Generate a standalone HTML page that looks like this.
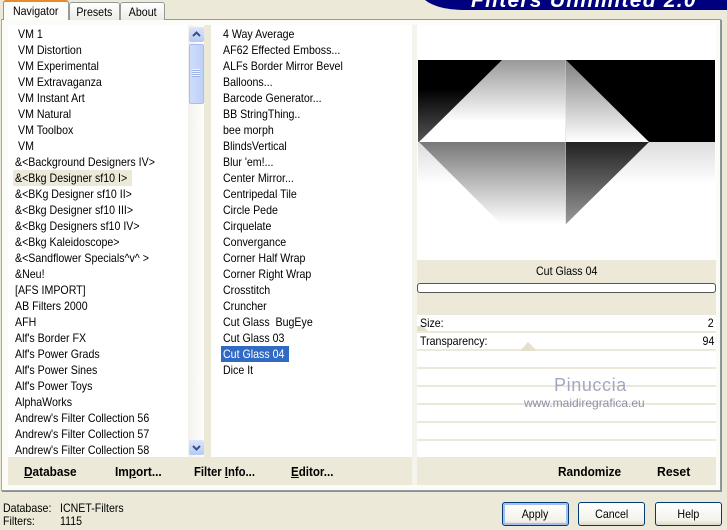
<!DOCTYPE html>
<html><head><meta charset="utf-8"><style>
html,body{margin:0;padding:0}
body{width:727px;height:530px;position:relative;overflow:hidden;background:#ece9d8;font:12px/16px "Liberation Sans",sans-serif;color:#000}
.a{position:absolute}
.r{position:absolute;white-space:pre;height:16px;line-height:16px;transform:scaleX(.885);transform-origin:0 0}
.e{transform-origin:100% 0}
.b{font-weight:bold;font-size:13px;transform:scaleX(.91)}
.s{display:inline-block;transform:scaleX(.885);white-space:pre}
u{text-decoration:underline}
.btn{position:absolute;top:502px;width:65px;height:22px;border:1px solid #003c74;border-radius:3px;background:linear-gradient(#fff,#f3f2ea 80%,#dcd8c8);text-align:center;line-height:22px}
</style></head><body>
<svg class="a" style="left:420px;top:0" width="307" height="12"><path d="M5 0C14 7 28 10 46 10H307V0Z" fill="#00007f"/></svg>
<div class="a" style="left:471px;top:-9px;color:#fff;font:italic bold 21px/20px 'Liberation Sans',sans-serif;letter-spacing:1.25px;white-space:pre">Filters Unlimited 2.0</div>

<div class="a" style="left:1px;top:19px;width:718px;height:470px;border:1px solid #919b9c;border-left-color:#a9a9a0;background:#fbfbf8;box-shadow:1px 1px 0 #8f8f88"></div>
<div class="a" style="left:3px;top:0;width:66px;height:20px;background:#fcfcf8;border:1px solid #919b9c;border-top:2px solid #e68b2c;border-bottom:0;border-radius:3px 3px 0 0;box-sizing:border-box;text-align:center;line-height:18px"><span class="s">Navigator</span></div>
<div class="a" style="left:69px;top:2px;width:49px;height:17px;background:linear-gradient(#fff,#ecebe4);border:1px solid #919b9c;border-bottom:0;border-radius:3px 3px 0 0;text-align:center;line-height:18px"><span class="s">Presets</span></div>
<div class="a" style="left:120px;top:2px;width:43px;height:17px;background:linear-gradient(#fff,#ecebe4);border:1px solid #919b9c;border-bottom:0;border-radius:3px 3px 0 0;text-align:center;line-height:18px"><span class="s">About</span></div>

<div class="a" style="left:8px;top:25px;width:180px;height:432px;background:#fff"></div>
<div class="a" style="left:188px;top:25px;width:16px;height:432px;background:linear-gradient(90deg,#f3f1ec,#fefefb)"></div>
<div class="a" style="left:204px;top:25px;width:7px;height:432px;background:#ece9d8"></div>
<div class="a" style="left:211px;top:25px;width:201px;height:432px;background:#fff"></div>
<div class="a" style="left:412px;top:25px;width:5px;height:460px;background:#f5f4ec"></div>
<div class="a" style="left:417px;top:25px;width:299px;height:235px;background:#fff"></div>

<div class="a" style="left:189px;top:27px;width:15px;height:15px;background:linear-gradient(#dbe6fc,#b6c9f6);border-radius:2px"></div>
<svg class="a" style="left:189px;top:27px" width="15" height="15"><path d="M4 9L7.500 5.500L11 9" fill="none" stroke="#3a5080" stroke-width="2"/></svg>
<div class="a" style="left:189px;top:44px;width:13px;height:58px;border:1px solid #a9bdf0;background:linear-gradient(90deg,#cfdcfb,#bed0f9);border-radius:2px"></div>
<div class="a" style="left:192px;top:69px;width:8px;height:8px;background:repeating-linear-gradient(#eef3fe 0 1px,#9db3e6 1px 2px)"></div>
<div class="a" style="left:189px;top:440px;width:15px;height:15px;background:linear-gradient(#dbe6fc,#b6c9f6);border-radius:2px"></div>
<svg class="a" style="left:189px;top:440px" width="15" height="15"><path d="M4 6L7.500 9.500L11 6" fill="none" stroke="#3a5080" stroke-width="2"/></svg>

<div class="a" style="left:13px;top:170px;width:119px;height:16px;background:#ece9d8"></div>
<div class="r" style="left:18px;top:26px">VM 1</div>
<div class="r" style="left:18px;top:42px">VM Distortion</div>
<div class="r" style="left:18px;top:58px">VM Experimental</div>
<div class="r" style="left:18px;top:74px">VM Extravaganza</div>
<div class="r" style="left:18px;top:90px">VM Instant Art</div>
<div class="r" style="left:18px;top:106px">VM Natural</div>
<div class="r" style="left:18px;top:122px">VM Toolbox</div>
<div class="r" style="left:18px;top:138px">VM</div>
<div class="r" style="left:15px;top:154px">&amp;&lt;Background Designers IV&gt;</div>
<div class="r" style="left:15px;top:170px">&amp;&lt;Bkg Designer sf10 I&gt;</div>
<div class="r" style="left:15px;top:186px">&amp;&lt;BKg Designer sf10 II&gt;</div>
<div class="r" style="left:15px;top:202px">&amp;&lt;Bkg Designer sf10 III&gt;</div>
<div class="r" style="left:15px;top:218px">&amp;&lt;Bkg Designers sf10 IV&gt;</div>
<div class="r" style="left:15px;top:234px">&amp;&lt;Bkg Kaleidoscope&gt;</div>
<div class="r" style="left:15px;top:250px">&amp;&lt;Sandflower Specials^v^ &gt;</div>
<div class="r" style="left:15px;top:266px">&amp;Neu!</div>
<div class="r" style="left:15px;top:282px">[AFS IMPORT]</div>
<div class="r" style="left:15px;top:298px">AB Filters 2000</div>
<div class="r" style="left:15px;top:314px">AFH</div>
<div class="r" style="left:15px;top:330px">Alf's Border FX</div>
<div class="r" style="left:15px;top:346px">Alf's Power Grads</div>
<div class="r" style="left:15px;top:362px">Alf's Power Sines</div>
<div class="r" style="left:15px;top:378px">Alf's Power Toys</div>
<div class="r" style="left:15px;top:394px">AlphaWorks</div>
<div class="r" style="left:15px;top:410px">Andrew's Filter Collection 56</div>
<div class="r" style="left:15px;top:426px">Andrew's Filter Collection 57</div>
<div class="r" style="left:15px;top:442px">Andrew's Filter Collection 58</div>

<div class="a" style="left:221px;top:346px;width:68px;height:16px;background:#316ac5"></div>
<div class="r" style="left:223px;top:26px">4 Way Average</div>
<div class="r" style="left:223px;top:42px">AF62 Effected Emboss...</div>
<div class="r" style="left:223px;top:58px">ALFs Border Mirror Bevel</div>
<div class="r" style="left:223px;top:74px">Balloons...</div>
<div class="r" style="left:223px;top:90px">Barcode Generator...</div>
<div class="r" style="left:223px;top:106px">BB StringThing..</div>
<div class="r" style="left:223px;top:122px">bee morph</div>
<div class="r" style="left:223px;top:138px">BlindsVertical</div>
<div class="r" style="left:223px;top:154px">Blur 'em!...</div>
<div class="r" style="left:223px;top:170px">Center Mirror...</div>
<div class="r" style="left:223px;top:186px">Centripedal Tile</div>
<div class="r" style="left:223px;top:202px">Circle Pede</div>
<div class="r" style="left:223px;top:218px">Cirquelate</div>
<div class="r" style="left:223px;top:234px">Convergance</div>
<div class="r" style="left:223px;top:250px">Corner Half Wrap</div>
<div class="r" style="left:223px;top:266px">Corner Right Wrap</div>
<div class="r" style="left:223px;top:282px">Crosstitch</div>
<div class="r" style="left:223px;top:298px">Cruncher</div>
<div class="r" style="left:223px;top:314px">Cut Glass  BugEye</div>
<div class="r" style="left:223px;top:330px">Cut Glass 03</div>
<div class="r" style="left:223px;top:346px;color:#fff">Cut Glass 04</div>
<div class="r" style="left:223px;top:362px">Dice It</div>

<svg class="a" style="left:418px;top:60px" width="297" height="166">
<defs>
<linearGradient id="g1" x1="0" y1="0" x2="0" y2="1"><stop offset="0" stop-color="#999"/><stop offset=".75" stop-color="#fff"/><stop offset="1" stop-color="#fff"/></linearGradient>
<linearGradient id="g1b" x1="0" y1="0" x2="0" y2="1"><stop offset="0" stop-color="#808080"/><stop offset="1" stop-color="#fff"/></linearGradient>
<linearGradient id="g2" x1="0" y1="0" x2="0" y2="1"><stop offset="0" stop-color="#787878"/><stop offset="1" stop-color="#fff"/></linearGradient>
<linearGradient id="g3" x1="0" y1="0" x2="0" y2="1"><stop offset="0" stop-color="#222"/><stop offset="1" stop-color="#999"/></linearGradient>
<linearGradient id="g4" x1="0" y1="0" x2="0" y2="1"><stop offset="0" stop-color="#000"/><stop offset=".35" stop-color="#000"/><stop offset="1" stop-color="#555"/></linearGradient>
<linearGradient id="g5" x1="0" y1="0" x2="0" y2="1"><stop offset="0" stop-color="#ddd"/><stop offset=".5" stop-color="#fff"/><stop offset="1" stop-color="#fff"/></linearGradient>
</defs>
<rect x="0" y="0" width="297" height="82" fill="#000"/>
<rect x="0" y="0" width="84" height="82" fill="url(#g4)"/>
<rect x="0" y="82" width="297" height="84" fill="url(#g5)"/>
<path d="M84 0H148V82H1Z" fill="url(#g1)"/>
<path d="M148 0L231 82H148Z" fill="url(#g1b)"/>
<path d="M1 82H148V164H83Z" fill="url(#g2)"/>
<path d="M148 82H231L148 164Z" fill="url(#g3)"/>
<rect x="147" y="0" width="1" height="164" fill="#ccc" opacity=".4"/>
</svg>

<div class="a" style="left:417px;top:260px;width:299px;height:55px;background:#ece9d8"></div>
<div class="a" style="left:417px;top:263px;width:299px;height:16px;text-align:center"><span class="s">Cut Glass 04</span></div>
<div class="a" style="left:417px;top:283px;width:297px;height:8px;border:1px solid #555;border-radius:3px;background:#fff"></div>

<div class="a" style="left:417px;top:315px;width:299px;height:142px;background:#fff"></div>
<div class="a" style="left:417px;top:331px;width:299px;height:2px;background:#ece9d8"></div>
<div class="a" style="left:417px;top:349px;width:299px;height:2px;background:#ece9d8"></div>
<div class="a" style="left:417px;top:367px;width:299px;height:2px;background:#ece9d8"></div>
<div class="a" style="left:417px;top:385px;width:299px;height:2px;background:#ece9d8"></div>
<div class="a" style="left:417px;top:403px;width:299px;height:2px;background:#ece9d8"></div>
<div class="a" style="left:417px;top:421px;width:299px;height:2px;background:#ece9d8"></div>
<div class="a" style="left:417px;top:439px;width:299px;height:2px;background:#ece9d8"></div>
<svg class="a" style="left:417px;top:326px" width="299" height="25"><path d="M0 5H11L6 0H0ZM103 25L111 16L120 25Z" fill="#e4e0cc"/></svg>
<div class="r" style="left:420px;top:315px">Size:</div>
<div class="r e" style="right:13px;top:315px">2</div>
<div class="r" style="left:420px;top:333px">Transparency:</div>
<div class="r e" style="right:13px;top:333px">94</div>
<div class="r" style="left:554px;top:375px;font-size:18px;line-height:20px;height:20px;color:#a3a6c4;letter-spacing:.6px;transform:none">Pinuccia</div>
<div class="r" style="left:524px;top:395px;font-size:12px;color:#8d8fa8;transform:none">www.maidiregrafica.eu</div>

<div class="a" style="left:8px;top:457px;width:404px;height:28px;background:#ece9d8"></div>
<div class="a" style="left:417px;top:457px;width:299px;height:28px;background:#ece9d8"></div>
<div class="r b" style="left:24px;top:464px"><u>D</u>atabase</div>
<div class="r b" style="left:115px;top:464px">Im<u>p</u>ort...</div>
<div class="r b" style="left:194px;top:464px;transform:scaleX(.87)">Filter <u>I</u>nfo...</div>
<div class="r b" style="left:291px;top:464px;transform:scaleX(.89)"><u>E</u>ditor...</div>
<div class="r b" style="left:558px;top:464px">Randomize</div>
<div class="r b" style="left:657px;top:464px;transform:scaleX(.94)">Reset</div>

<div class="r" style="left:3px;top:500px">Database:</div>
<div class="r" style="left:60px;top:500px">ICNET-Filters</div>
<div class="r" style="left:3px;top:513px">Filters:</div>
<div class="r" style="left:60px;top:513px">1115</div>

<div class="btn" style="left:502px;box-shadow:inset 0 0 0 2px #a5bdef"><span class="s">Apply</span></div>
<div class="btn" style="left:578px"><span class="s">Cancel</span></div>
<div class="btn" style="left:655px"><span class="s">Help</span></div>
</body></html>
